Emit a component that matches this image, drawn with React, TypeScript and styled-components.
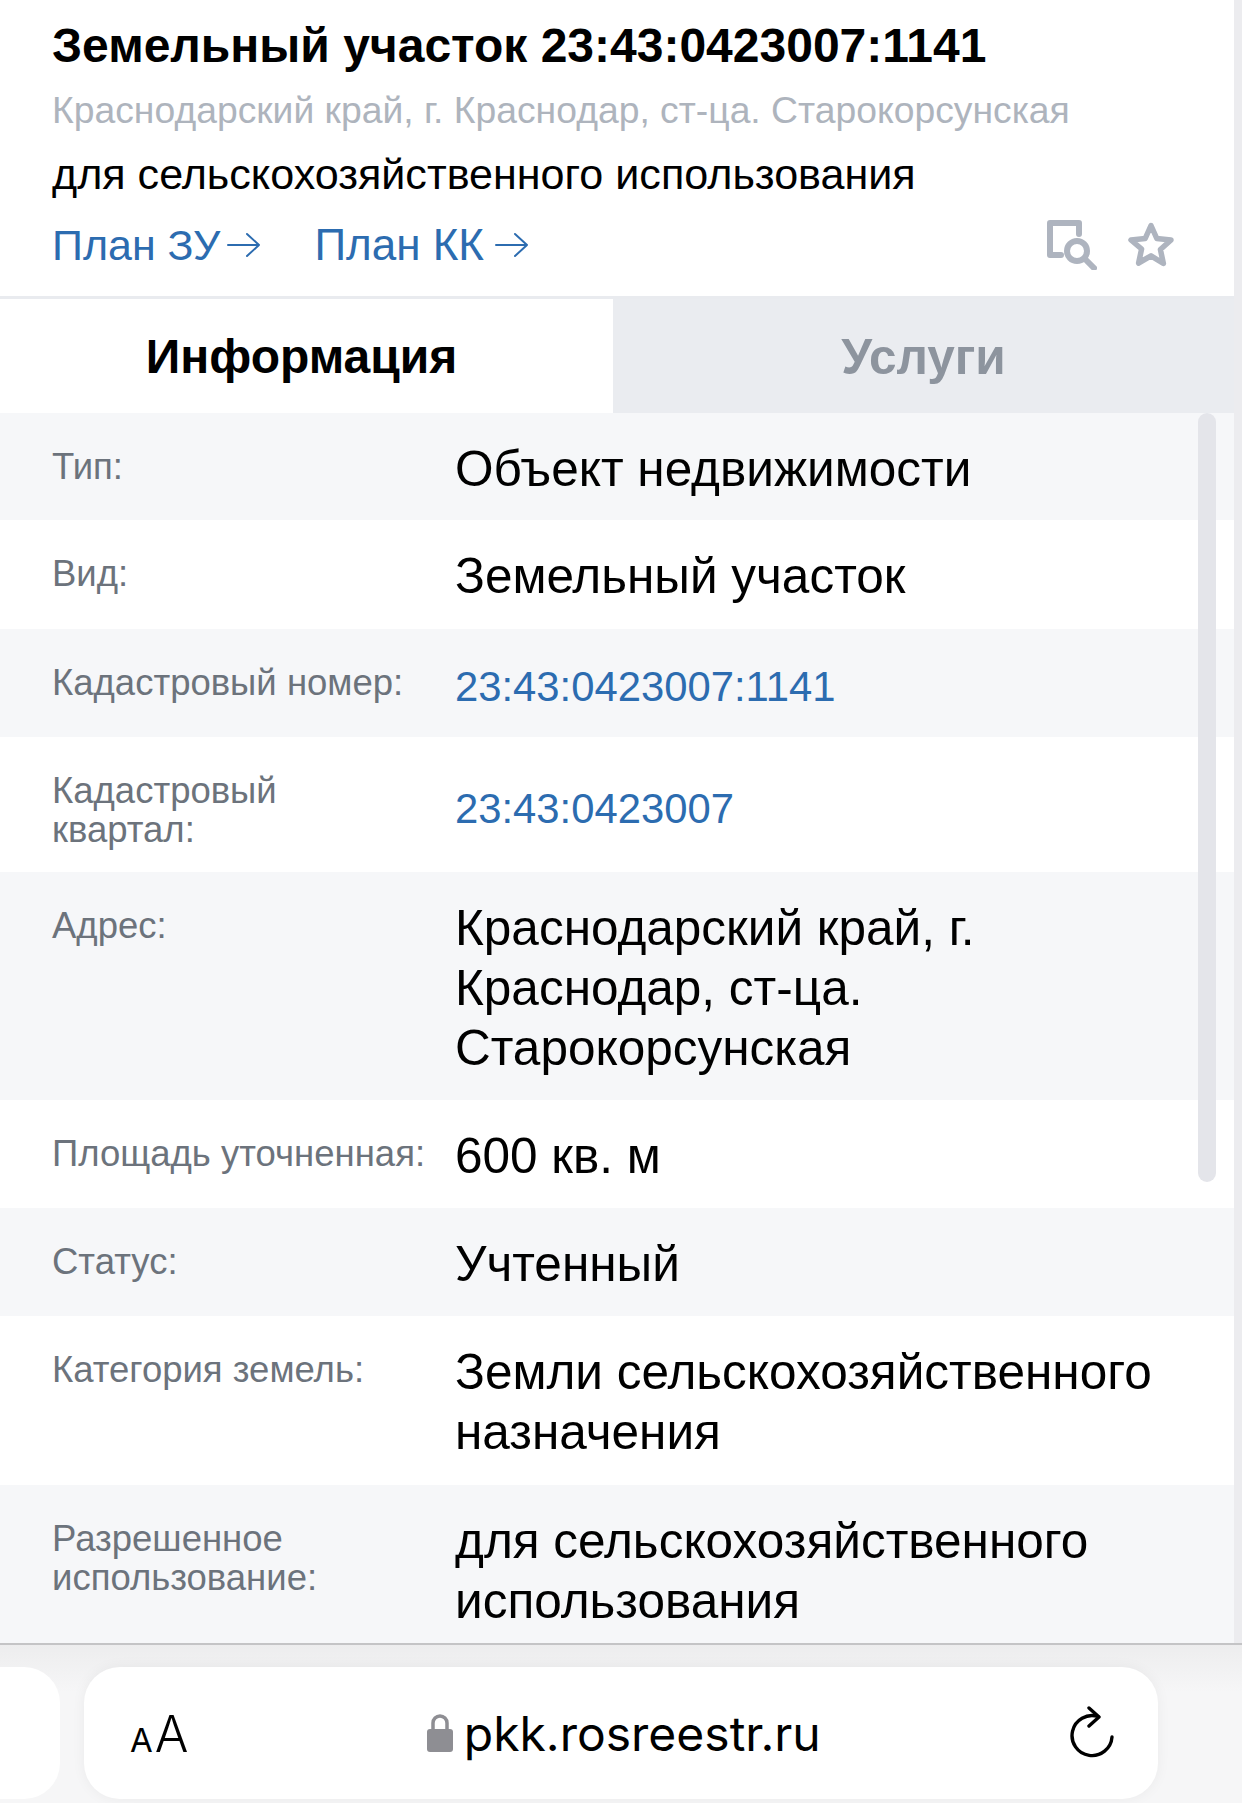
import React from "react";
import styled, { createGlobalStyle } from "styled-components";

const Global = createGlobalStyle`
  html, body { margin: 0; padding: 0; background: #fff; }
  #root { width: 1242px; height: 1803px; overflow: hidden; }
  * { box-sizing: border-box; }
`;
const Page = styled.div`
  width: 1242px; height: 1803px; display: flex; flex-direction: column;
  font-family: "Liberation Sans", Arial, sans-serif; background: #fff; overflow: hidden;
`;
const Content = styled.div`
  height: 1643px; display: flex; flex-direction: column; border-right: 8px solid #ececef; position: relative; flex: none;
`;
const Header = styled.header`
  height: 299px; flex: none; padding: 18px 0 0 52px; border-bottom: 3px solid #e9ebef; display: flex; flex-direction: column;
`;
const Title = styled.h1`
  margin: 0; font-size: 48px; line-height: 56px; font-weight: 700; color: #000; white-space: nowrap;
`;
const Address = styled.div`
  margin-top: 8px; font-size: 37.3px; line-height: 56px; color: #aeb4bd; white-space: nowrap;
`;
const Purpose = styled.div`
  margin-top: 8px; font-size: 43.1px; line-height: 56px; color: #000; white-space: nowrap;
`;
const LinkRow = styled.div`
  margin-top: 15px; display: flex; align-items: center; height: 56px; padding-right: 60px;
`;
const PlanLink = styled.a<{ $wide?: boolean }>`
  display: flex; align-items: center; margin-right: 53px; color: #2c6cb0; white-space: nowrap;
  gap: ${p => (p.$wide ? "11px" : "7px")};
  font-size: ${p => (p.$wide ? "44px" : "43px")};
`;
const Tools = styled.div`
  margin-left: auto; display: flex; align-items: center; gap: 31px;
`;
const Tabs = styled.div`
  height: 114px; flex: none; display: grid; grid-template-columns: 613px 1fr;
`;
const Tab = styled.div<{ $active?: boolean }>`
  display: flex; align-items: center; justify-content: center; font-weight: 700;
  font-size: ${p => (p.$active ? "48px" : "49.5px")};
  padding-right: ${p => (p.$active ? "10px" : "0")};
  color: ${p => (p.$active ? "#000" : "#8d949e")}; background: ${p => (p.$active ? "#fff" : "#eaecf0")};
`;
const Rows = styled.div`
  flex: 1; overflow: hidden; position: relative;
`;
const Row = styled.div<{ $h: number; $odd: boolean }>`
  height: ${p => p.$h}px; display: grid; grid-template-columns: 403px 1fr; padding: 0 0 0 52px;
  background: ${p => (p.$odd ? "#f6f7f9" : "#fff")};
`;
const Label = styled.div`
  font-size: 36.5px; line-height: 39px; color: #6c737c; padding-top: 34px; white-space: nowrap;
`;
const Value = styled.div`
  font-size: 49.5px; line-height: 60px; padding-top: 26px; color: #000; white-space: nowrap;
`;
const LinkValue = styled.a`
  display: flex; align-items: center; font-size: 41.8px; line-height: 60px; padding-top: 8px; color: #2c6cb0;
`;
const Scrollbar = styled.div`
  position: absolute; left: 1198px; top: 0; width: 18px; height: 769px; border-radius: 9px; background: #e4e5ea;
`;
const Bottom = styled.div`
  flex: 1; border-top: 2px solid #c4c4c6; background: linear-gradient(#ededee, #f6f6f7 30%); display: flex;
  align-items: flex-start; padding-top: 22px; gap: 24px; position: relative;
`;
const SidePill = styled.div`
  width: 60px; height: 132px; flex: none; background: #fff; border-radius: 0 36px 36px 0;
`;
const UrlPill = styled.div`
  width: 1074px; height: 132px; flex: none; background: #fff; border-radius: 36px; display: flex;
  align-items: center; padding: 0 42px 0 46px; box-shadow: 0 0 14px rgba(0,0,0,.05); position: relative;
`;
const Aa = styled.div`
  font-family: "Inter", sans-serif; font-weight: 300; color: #000; font-size: 50px; display: flex; align-items: baseline;
  padding-top: 2px;
`;
const SmallA = styled.span`
  font-size: 33px; margin-right: 2px; font-weight: 400;
`;
const Url = styled.div`
  flex: 1; display: flex; align-items: center; justify-content: center; gap: 10px; font-family: "Inter", sans-serif;
  font-size: 48px; color: #000; padding-right: 12px;
`;

const rows: { l: React.ReactNode; v: React.ReactNode; h: number; link?: boolean }[] = [
  { l: "Тип:", v: "Объект недвижимости", h: 107 },
  { l: "Вид:", v: "Земельный участок", h: 109 },
  { l: "Кадастровый номер:", v: "23:43:0423007:1141", h: 108, link: true },
  { l: <>Кадастровый<br />квартал:</>, v: "23:43:0423007", h: 135, link: true },
  { l: "Адрес:", v: <>Краснодарский край, г.<br />Краснодар, ст-ца.<br />Старокорсунская</>, h: 228 },
  { l: "Площадь уточненная:", v: "600 кв. м", h: 108 },
  { l: "Статус:", v: "Учтенный", h: 108 },
  { l: "Категория земель:", v: <>Земли сельскохозяйственного<br />назначения</>, h: 169 },
  { l: <>Разрешенное<br />использование:</>, v: <>для сельскохозяйственного<br />использования</>, h: 158 },
];

const Arrow = () => (
  <svg width="34" height="26" viewBox="0 0 34 26" fill="none" stroke="#2c6cb0" strokeWidth="2" strokeLinecap="round" strokeLinejoin="round">
    <path d="M1 13h31M20 2l12 11-12 11" />
  </svg>
);
const DocSearch = () => (
  <svg width="50" height="50" viewBox="0 0 50 50" fill="none" stroke="#aeb4bf" strokeWidth="6" strokeLinecap="round" strokeLinejoin="round">
    <path d="M32 14V3H3v32h11" />
    <circle cx="30" cy="31" r="10" />
    <path d="M38 39l9 9" />
  </svg>
);
const Star = () => (
  <svg width="46" height="46" viewBox="0 0 46 46" fill="none" stroke="#aeb4bf" strokeWidth="5.5" strokeLinejoin="round">
    <path d="M23 3.5l5.8 13 14.2 1.5-10.6 9.5 3 14L23 33.8 10.6 41l3-14L3 18l14.2-1.5z" />
  </svg>
);
const Lock = () => (
  <svg width="28" height="38" viewBox="0 0 28 38" fill="none">
    <path d="M7 18V9a7 7 0 0114 0v9" stroke="#8e8e93" strokeWidth="3.5" />
    <rect x="1" y="15" width="26" height="23" rx="3" fill="#8e8e93" />
  </svg>
);
const Reload = () => (
  <svg width="46" height="54" viewBox="0 0 46 54" fill="none" stroke="#000" strokeWidth="3.4" strokeLinecap="round" strokeLinejoin="round">
    <path d="M28 10.5A20 20 0 1 0 42 31" />
    <path d="M19 2l10 9-10 9" />
  </svg>
);

export default function App() {
  return (
    <Page>
      <Global />
      <Content>
        <Header>
          <Title>Земельный участок 23:43:0423007:1141</Title>
          <Address>Краснодарский край, г. Краснодар, ст-ца. Старокорсунская</Address>
          <Purpose>для сельскохозяйственного использования</Purpose>
          <LinkRow>
            <PlanLink>План ЗУ<Arrow /></PlanLink>
            <PlanLink $wide>План КК<Arrow /></PlanLink>
            <Tools><DocSearch /><Star /></Tools>
          </LinkRow>
        </Header>
        <Tabs>
          <Tab $active>Информация</Tab>
          <Tab>Услуги</Tab>
        </Tabs>
        <Rows>
          {rows.map((r, i) => (
            <Row key={i} $h={r.h} $odd={i % 2 === 0}>
              <Label>{r.l}</Label>
              {r.link ? <LinkValue>{r.v}</LinkValue> : <Value>{r.v}</Value>}
            </Row>
          ))}
          <Scrollbar />
        </Rows>
      </Content>
      <Bottom>
        <SidePill />
        <UrlPill>
          <Aa><SmallA>A</SmallA>A</Aa>
          <Url><Lock />pkk.rosreestr.ru</Url>
          <Reload />
        </UrlPill>
      </Bottom>
    </Page>
  );
}
